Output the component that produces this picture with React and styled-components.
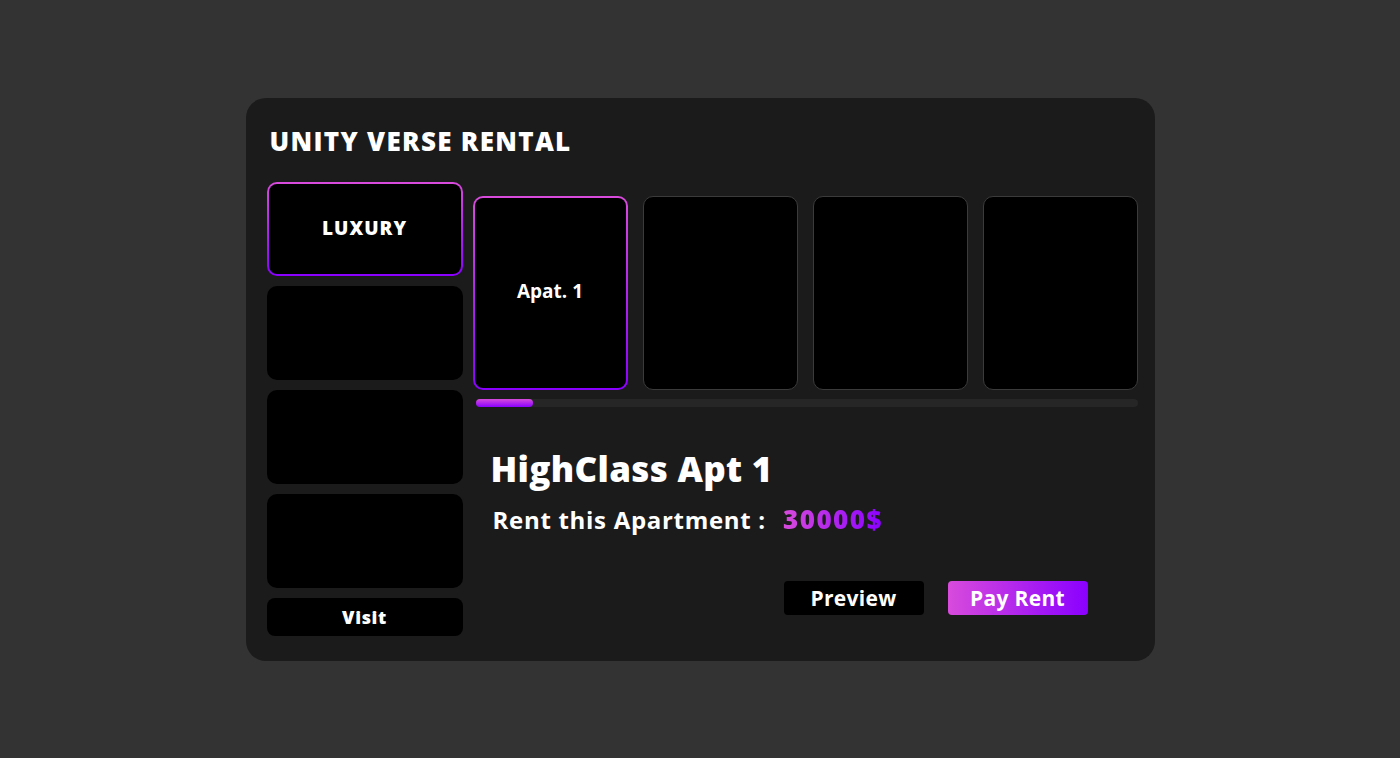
import React from "react";
import styled, { createGlobalStyle } from "styled-components";

const GlobalStyle = createGlobalStyle`
  body {
    margin: 0;
    background: #333333;
    font-family: "Open Sans", "Liberation Sans", sans-serif;
    color: #ffffff;
  }
`;

const gradient = "linear-gradient(#d84bdc, #8a00ff)";
const gradientX = "linear-gradient(90deg, #d84bdc, #8a00ff)";

const Page = styled.div`
  height: 758px;
  display: flex;
  justify-content: center;
  padding-top: 98px;
  box-sizing: border-box;
`;

const Card = styled.div`
  width: 909px;
  height: 563px;
  background: #1b1b1b;
  border-radius: 20px;
  box-sizing: border-box;
  padding: 24px 17px 0 21px;
`;

const Title = styled.h1`
  margin: 0 0 0 3px;
  font-size: 26px;
  font-weight: 800;
  line-height: 38px;
  letter-spacing: 1.3px;
`;

const Body = styled.div`
  display: flex;
  gap: 10px;
  margin-top: 22px;
`;

const SideColumn = styled.div`
  width: 196px;
  display: flex;
  flex-direction: column;
  gap: 10px;
`;

const Category = styled.div`
  height: 94px;
  border-radius: 10px;
  box-sizing: border-box;
  display: flex;
  align-items: center;
  justify-content: center;
  padding-bottom: 2px;
  font-size: 19px;
  font-weight: 800;
  letter-spacing: 1px;
  border: 2px solid transparent;
  background: ${(p) =>
    p.$active
      ? `linear-gradient(#000, #000) padding-box, ${gradient} border-box`
      : "#000"};
`;

const VisitButton = styled.button`
  height: 38px;
  border: none;
  border-radius: 8px;
  background: #000;
  color: #fff;
  font-family: inherit;
  font-size: 18px;
  font-weight: 800;
  letter-spacing: 0.6px;
`;

const MainColumn = styled.div`
  flex: 1;
  display: flex;
  flex-direction: column;
  padding-top: 14px;
`;

const Apartments = styled.div`
  display: grid;
  grid-template-columns: repeat(4, 1fr);
  gap: 15px;
`;

const Apartment = styled.div`
  height: 194px;
  border-radius: 10px;
  box-sizing: border-box;
  display: flex;
  align-items: center;
  justify-content: center;
  padding-bottom: 4px;
  font-size: 19px;
  font-weight: 700;
  border: ${(p) => (p.$active ? "2px" : "1px")} solid
    ${(p) => (p.$active ? "transparent" : "#3b3b3b")};
  background: ${(p) =>
    p.$active
      ? `linear-gradient(#000, #000) padding-box, ${gradient} border-box`
      : "#000"};
`;

const Track = styled.div`
  margin: 9px 0 0 3px;
  height: 8px;
  border-radius: 4px;
  background: #262626;
`;

const Thumb = styled.div`
  height: 100%;
  border-radius: 4px;
  background: ${gradient};
`;

const Info = styled.div`
  padding: 40px 0 0 18px;
`;

const AptName = styled.h2`
  margin: 0;
  font-size: 35px;
  font-weight: 800;
  line-height: 44px;
  letter-spacing: 0.3px;
`;

const RentLine = styled.div`
  margin: 10px 0 0 2px;
  display: flex;
  align-items: baseline;
  gap: 17px;
  font-size: 24px;
  font-weight: 700;
  letter-spacing: 0.7px;
`;

const Price = styled.span`
  font-weight: 800;
  font-size: 26px;
  letter-spacing: 1.5px;
  background: ${gradientX};
  -webkit-background-clip: text;
  background-clip: text;
  color: transparent;
`;

const Actions = styled.div`
  display: flex;
  justify-content: flex-end;
  gap: 24px;
  margin-top: 44px;
  padding-right: 50px;
`;

const ActionButton = styled.button`
  width: 140px;
  height: 34px;
  border: none;
  border-radius: 4px;
  color: #fff;
  font-family: inherit;
  font-size: 21px;
  font-weight: 700;
  letter-spacing: 0.3px;
  background: ${(p) => (p.$primary ? gradientX : "#000")};
`;

const categories = ["LUXURY", "", "", ""];
const apartments = ["Apat. 1", "", "", ""];

export default function App() {
  return (
    <>
      <GlobalStyle />
      <Page>
        <Card>
          <Title>UNITY VERSE RENTAL</Title>
          <Body>
            <SideColumn>
              {categories.map((c, i) => (
                <Category key={i} $active={i === 0}>
                  {c}
                </Category>
              ))}
              <VisitButton>Visit</VisitButton>
            </SideColumn>
            <MainColumn>
              <Apartments>
                {apartments.map((a, i) => (
                  <Apartment key={i} $active={i === 0}>
                    {a}
                  </Apartment>
                ))}
              </Apartments>
              <Track>
                <Thumb style={{ width: "57px" }} />
              </Track>
              <Info>
                <AptName>HighClass Apt 1</AptName>
                <RentLine>
                  <span>Rent this Apartment :</span>
                  <Price>30000$</Price>
                </RentLine>
              </Info>
              <Actions>
                <ActionButton>Preview</ActionButton>
                <ActionButton $primary>Pay Rent</ActionButton>
              </Actions>
            </MainColumn>
          </Body>
        </Card>
      </Page>
    </>
  );
}
